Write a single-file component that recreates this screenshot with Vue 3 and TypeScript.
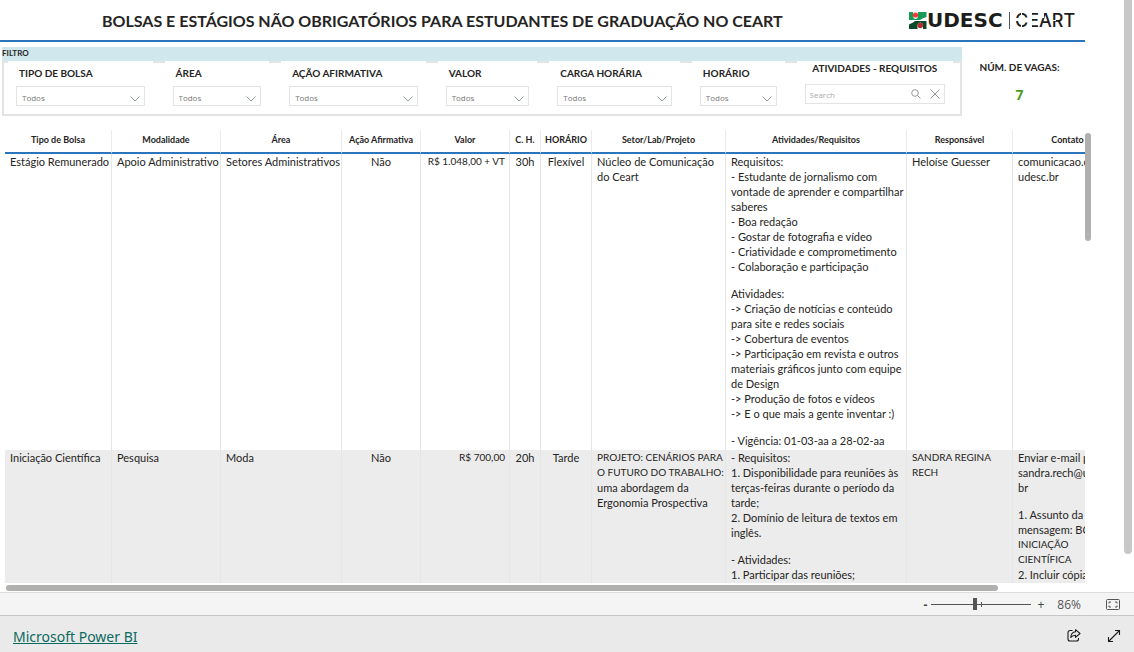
<script setup lang="ts">
import { ref } from 'vue'

interface Slicer {
  id: string
  label: string
}

interface Cell {
  blocks: string[]
  align?: 'center' | 'right'
}

const slicers: Slicer[] = [
  { id: 'tipo', label: 'TIPO DE BOLSA' },
  { id: 'area', label: 'ÁREA' },
  { id: 'acao', label: 'AÇÃO AFIRMATIVA' },
  { id: 'valor', label: 'VALOR' },
  { id: 'carga', label: 'CARGA HORÁRIA' },
  { id: 'horario', label: 'HORÁRIO' },
]

const columns: string[] = [
  'Tipo de Bolsa',
  'Modalidade',
  'Área',
  'Ação Afirmativa',
  'Valor',
  'C. H.',
  'HORÁRIO',
  'Setor/Lab/Projeto',
  'Atividades/Requisitos',
  'Responsável',
  'Contato',
]

const rows: Cell[][] = [
  [
    { blocks: ['Estágio Remunerado'] },
    { blocks: ['Apoio Administrativo'] },
    { blocks: ['Setores Administrativos'] },
    { blocks: ['Não'], align: 'center' },
    { blocks: ['R$ 1.048,00 + VT'], align: 'right' },
    { blocks: ['30h'], align: 'center' },
    { blocks: ['Flexível'], align: 'center' },
    { blocks: ['Núcleo de Comunicação\ndo Ceart'] },
    {
      blocks: [
        'Requisitos:\n- Estudante de jornalismo com\nvontade de aprender e compartilhar\nsaberes\n- Boa redação\n- Gostar de fotografia e vídeo\n- Criatividade e comprometimento\n- Colaboração e participação',
        'Atividades:\n-> Criação de notícias e conteúdo\npara site e redes sociais\n-> Cobertura de eventos\n-> Participação em revista e outros\nmateriais gráficos junto com equipe\nde Design\n-> Produção de fotos e vídeos\n-> E o que mais a gente inventar :)',
        '- Vigência: 01-03-aa a 28-02-aa',
      ],
    },
    { blocks: ['Heloíse Guesser'] },
    { blocks: ['comunicacao.ceart@\nudesc.br'] },
  ],
  [
    { blocks: ['Iniciação Científica'] },
    { blocks: ['Pesquisa'] },
    { blocks: ['Moda'] },
    { blocks: ['Não'], align: 'center' },
    { blocks: ['R$ 700,00'], align: 'right' },
    { blocks: ['20h'], align: 'center' },
    { blocks: ['Tarde'], align: 'center' },
    { blocks: ['PROJETO: CENÁRIOS PARA\nO FUTURO DO TRABALHO:\numa abordagem da\nErgonomia Prospectiva'] },
    {
      blocks: [
        '- Requisitos:\n1. Disponibilidade para reuniões às\nterças-feiras durante o período da\ntarde;\n2. Domínio de leitura de textos em\ninglês.',
        '- Atividades:\n1. Participar das reuniões;',
      ],
    },
    { blocks: ['SANDRA REGINA\nRECH'] },
    {
      blocks: [
        'Enviar e-mail para\nsandra.rech@udesc.\nbr',
        '1. Assunto da\nmensagem: BOLSA\nINICIAÇÃO\nCIENTÍFICA\n2. Incluir cópia do',
      ],
    },
  ],
]

const isCaps = (line: string): boolean => line === line.toUpperCase()

const search = ref('')
const zoom = ref(43)
</script>

<template>
  <div class="page">
    <main class="report">
      <header class="head">
        <h1>BOLSAS E ESTÁGIOS NÃO OBRIGATÓRIOS PARA ESTUDANTES DE GRADUAÇÃO NO CEART</h1>
        <svg class="logo" width="168" height="28" viewBox="0 -4 168 28" role="img" aria-label="UDESC CEART">
          <path d="M0 1h4v4.500q.5 2.500 2.500 2.500t2.500-2.500V1h8.500v5l-4 1.500L11 9H0z" fill="#189a58" />
          <path d="M17.500 18h-3.500v-4q-.5-2.500-2.700-2.500t-2.800 2.500v4H0v-4.500l4-2L6 10h11.500z" fill="#0d4a2a" />
          <circle cx="6.500" cy="4" r="2.600" fill="#ee3b33" />
          <circle cx="11.300" cy="14.500" r="2.700" fill="#b82a2e" />
          <text class="logo-bold" x="18" y="16">UDESC</text>
          <rect x="100" y="1" width="1" height="17" fill="#555" />
          <text class="logo-thin" x="106" y="16">CEART</text>
          <g fill="#fff">
            <rect x="106" y="7" width="4" height="3" />
            <rect x="112" y="2" width="1" height="15" />
            <rect x="120" y="2" width="3" height="15" />
            <rect x="130" y="2" width="5" height="5" />
            <rect x="144" y="9" width="3" height="1" />
          </g>
        </svg>
      </header>

      <section class="top">
        <div class="filter">
          <h2>FILTRO</h2>
          <div class="slicers">
            <div v-for="s in slicers" :key="s.id" class="slicer">
              <label :for="s.id">{{ s.label }}</label>
              <div class="drop">
                <select :id="s.id">
                  <option>Todos</option>
                </select>
                <svg width="10" height="6" viewBox="0 0 10 6" aria-hidden="true">
                  <path d="M.5.5 5 5 9.500.5" fill="none" stroke="#8f9da0" />
                </svg>
              </div>
            </div>
            <div class="slicer search">
              <label for="busca">ATIVIDADES - REQUISITOS</label>
              <div class="box">
                <input id="busca" v-model="search" type="text" placeholder="Search" />
                <button type="button" aria-label="Pesquisar">
                  <svg width="10" height="10" viewBox="0 0 10 10">
                    <circle cx="4" cy="4" r="3.300" fill="none" stroke="#999" />
                    <path d="m6.300 6.300 3.200 3.200" stroke="#999" />
                  </svg>
                </button>
                <button type="button" aria-label="Limpar" @click="search = ''">
                  <svg width="10" height="10" viewBox="0 0 10 10">
                    <path d="m.5.5 9 9m0-9-9 9" stroke="#999" />
                  </svg>
                </button>
              </div>
            </div>
          </div>
        </div>
        <div class="vagas">
          <span>NÚM. DE VAGAS:</span>
          <strong>7</strong>
        </div>
      </section>

      <section class="grid">
        <div class="viewport">
          <table>
            <colgroup>
              <col v-for="(c, i) in columns" :key="c" :class="'c' + i" />
            </colgroup>
            <thead>
              <tr>
                <th v-for="c in columns" :key="c" scope="col">{{ c }}</th>
              </tr>
            </thead>
            <tbody>
              <tr v-for="(row, r) in rows" :key="r">
                <td v-for="(cell, c) in row" :key="c" :class="cell.align">
                  <p v-for="block in cell.blocks" :key="block">
                    <span v-for="line in block.split('\n')" :key="line" :class="{ caps: isCaps(line) }">{{ line }}</span>
                  </p>
                </td>
              </tr>
            </tbody>
          </table>
        </div>
        <div class="bar-v"></div>
        <div class="bar-h"></div>
      </section>
      <div class="page-bar"></div>
    </main>

    <div class="zoombar">
      <button type="button" class="minus" aria-label="Diminuir zoom">-</button>
      <div class="slider">
        <input v-model="zoom" type="range" min="0" max="100" aria-label="Zoom" />
        <i></i>
      </div>
      <button type="button" aria-label="Aumentar zoom">+</button>
      <span>86%</span>
      <button type="button" aria-label="Ajustar à página">
        <svg width="14" height="11" viewBox="0 0 14 11" fill="none" stroke="#555">
          <rect x=".5" y=".5" width="13" height="10" rx="1" />
          <path d="M5 3H3v1.500M9 3h2v1.500M5 8H3V6.500M9 8h2V6.500" />
        </svg>
      </button>
    </div>

    <footer class="foot">
      <a href="#">Microsoft Power BI</a>
      <button type="button" aria-label="Compartilhar">
        <svg width="14" height="14" viewBox="0 0 14 14" fill="none" stroke="#1b1b1b" stroke-width="1.100" stroke-linejoin="round">
          <path d="M5.500 1.500H3a2 2 0 0 0-2 2V10a2 2 0 0 0 2 2h6.500a2 2 0 0 0 2-2V9" />
          <path d="M8.500.7 13 4.500 8.500 8.300V6.200C6.200 6.100 5 7 3.800 8.500 4 5.500 5.500 3.100 8.500 2.800z" />
        </svg>
      </button>
      <button type="button" aria-label="Tela cheia">
        <svg width="14" height="14" viewBox="0 0 14 14" fill="none" stroke="#1b1b1b" stroke-width="1.100">
          <path d="M8 1.500h4.500V6M6 12.500H1.500V8M12.500 1.500l-11 11" />
        </svg>
      </button>
    </footer>
  </div>
</template>

<style>
body {
  margin: 0;
}
</style>

<style scoped>
.page {
  display: flex;
  flex-direction: column;
  height: 100vh;
  overflow: hidden;
  background: #fff;
  color: #252423;
  font-family: Lato, "Open Sans", sans-serif;
  font-size: 11px;
}

.page * {
  box-sizing: border-box;
}

button {
  display: flex;
  padding: 0;
  border: 0;
  background: none;
  color: #444;
  font: inherit;
}

.report {
  position: relative;
  flex: 1;
  min-height: 0;
  display: flex;
  flex-direction: column;
  padding-right: 49px;
}

.head {
  display: flex;
  align-items: center;
  justify-content: space-between;
  height: 42px;
  padding: 2px 8px 0 102px;
  border-bottom: 2px solid #2b75bd;
}

h1 {
  margin: 0;
  font-size: 16px;
  line-height: 20px;
  font-weight: 700;
  white-space: nowrap;
}

.logo {
  overflow: visible;
}

.logo-bold {
  font: 700 20px "DejaVu Sans", sans-serif;
  fill: #1d1d1b;
}

.logo-thin {
  font: 500 18px Inter, sans-serif;
  fill: #1d1d1b;
}

.top {
  display: flex;
  padding: 5px 0 0 2px;
}

.filter {
  flex: 1;
  border: 2px solid #e4e4e4;
  border-top: 0;
}

h2 {
  margin: 0 -2px;
  height: 14px;
  background: #d0e7ee;
  font-size: 8px;
  line-height: 13px;
  font-weight: 700;
}

.slicers {
  display: grid;
  grid-template-columns: 145fr 105fr 145fr 100fr 131fr 93fr 157fr;
  gap: 12px;
  height: 53px;
  padding: 0 7px 0 4px;
  border-top: 2px solid #e4e4e4;
}

.slicer {
  display: flex;
  flex-direction: column;
  gap: 5px;
  min-width: 0;
  margin-top: -2px;
  padding: 4px 8px 0;
  background: #fff;
}

label {
  padding-left: 3px;
  font-size: 10px;
  line-height: 16px;
  font-weight: 700;
  white-space: nowrap;
}

.drop {
  position: relative;
}

.drop select,
.box {
  width: 100%;
  height: 20px;
  border: 1px solid #e3e3e3;
  border-radius: 0;
  background: #fff;
}

.drop select {
  display: block;
  appearance: none;
  padding: 2px 5px 0;
  color: #777;
  font: 8px "Open Sans", sans-serif;
}

.drop svg {
  position: absolute;
  right: 5px;
  top: 10px;
}

.search {
  gap: 8px;
  padding-top: 0;
}

.search label {
  padding: 0;
  line-height: 15px;
  text-align: center;
}

.box {
  display: flex;
  align-items: center;
  gap: 9px;
  padding: 0 4px;
}

.box input {
  flex: 1;
  min-width: 0;
  padding: 0;
  border: 0;
  outline: 0;
  font: 8px "Open Sans", sans-serif;
}

.box input::placeholder {
  color: #aaa;
}

.vagas {
  width: 123px;
  display: flex;
  flex-direction: column;
  align-items: center;
  gap: 10px;
  padding: 12px 8px 0 0;
  font-size: 10px;
  line-height: 16px;
  font-weight: 700;
}

.vagas strong {
  color: #4a9c1c;
  font: 700 14px/20px "Open Sans", sans-serif;
}

.grid {
  position: relative;
  flex: 1;
  min-height: 0;
  padding: 14px 0 9px 5px;
}

.viewport {
  height: 100%;
  overflow: hidden;
}

table {
  width: 1118px;
  table-layout: fixed;
  border-collapse: separate;
  border-spacing: 0;
}

.c0 { width: 107px; }
.c1 { width: 109px; }
.c2 { width: 121px; }
.c3 { width: 79px; }
.c4 { width: 89px; }
.c5 { width: 31px; }
.c6 { width: 51px; }
.c7 { width: 134px; }
.c8 { width: 181px; }
.c9 { width: 106px; }
.c10 { width: 110px; }

th {
  height: 24px;
  padding: 0 0 2px;
  border-right: 1px solid #ebebeb;
  border-bottom: 2px solid #2b75bd;
  font-size: 9px;
  line-height: 16px;
  font-weight: 700;
  white-space: nowrap;
}

td {
  padding: 0 4px 2px 5px;
  border-right: 1px solid #e6e6e6;
  vertical-align: top;
  line-height: 15px;
  white-space: nowrap;
}

tbody tr:nth-child(even) td {
  background: #ececec;
}

td span {
  display: block;
}

.caps {
  font-size: 10px;
}

.center {
  text-align: center;
}

.right {
  text-align: right;
}

td p {
  margin: 0 0 12px;
}

td p:last-child {
  margin: 0;
}

td.center {
  padding: 0 0 2px;
}

.bar-v,
.bar-h,
.page-bar {
  position: absolute;
  border-radius: 4px;
  background: #b0b0ae;
}

.bar-v {
  top: 17px;
  right: -6px;
  width: 6px;
  height: 108px;
}

.bar-h {
  left: 6px;
  right: 87px;
  bottom: 1px;
  height: 6px;
}

.page-bar {
  top: -4px;
  right: 2px;
  bottom: 38px;
  width: 8px;
  background: #c8c8c8;
}

.zoombar {
  display: flex;
  align-items: center;
  justify-content: flex-end;
  height: 24px;
  padding-right: 14px;
  border-top: 1px solid #dcdcdc;
  border-bottom: 1px solid #c6c6c6;
  background: #f4f4f4;
  color: #555;
  font: 12px "Open Sans", sans-serif;
}

.minus {
  font-weight: 700;
}

.slider {
  position: relative;
  width: 100px;
  height: 12px;
  margin: 0 6px 0 4px;
}

.slider input {
  appearance: none;
  display: block;
  width: 100%;
  height: 12px;
  margin: 0;
  background: linear-gradient(#555, #555) center / 100% 1px no-repeat;
}

.slider input::-webkit-slider-thumb {
  appearance: none;
  width: 4px;
  height: 12px;
  background: #555;
}

.slider i {
  position: absolute;
  left: 50px;
  top: 4px;
  width: 1px;
  height: 5px;
  background: #555;
}

.zoombar span {
  margin: 0 25px 0 13px;
}

.foot {
  display: flex;
  align-items: center;
  gap: 26px;
  height: 36px;
  padding: 4px 13px 0;
  background: #eaeaea;
}

.foot a {
  margin-right: auto;
  color: #0b6a5f;
  font: 14px "Noto Sans", sans-serif;
  text-decoration: underline;
}
</style>
